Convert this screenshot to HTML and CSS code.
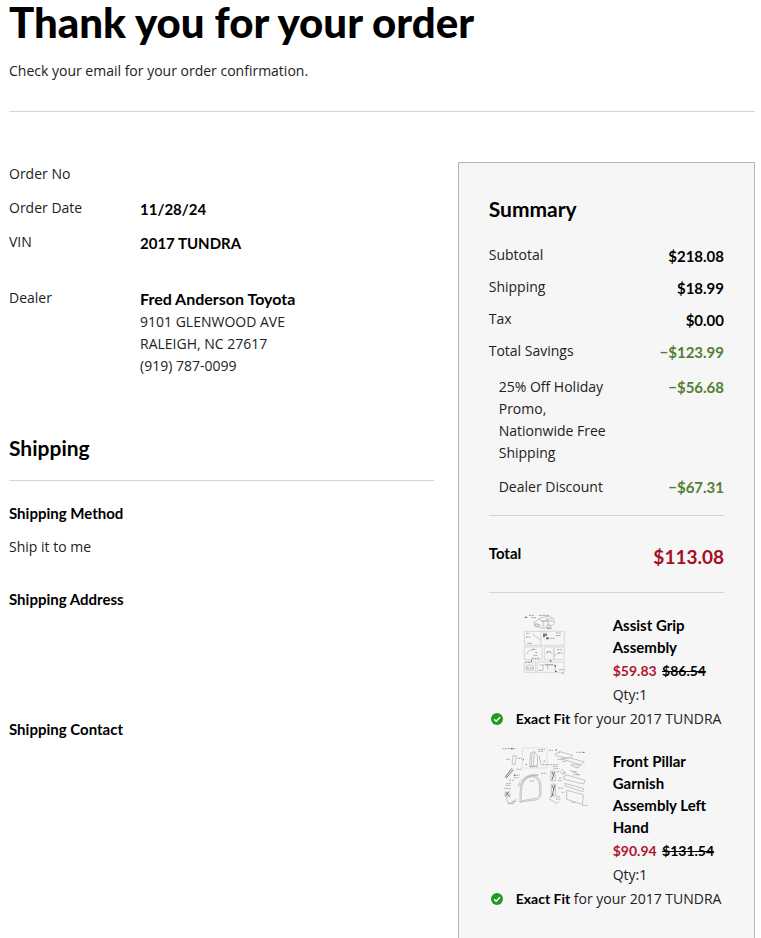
FILE: index.html
```html
<!DOCTYPE html>
<html lang="en">
<head>
    <meta charset="UTF-8">
    <meta name="viewport" content="width=device-width, initial-scale=1.0">
    <title>Order Confirmation</title>
    <link rel="stylesheet" href="styles.css">
</head>
<body>
    <header class="page-header">
        <h1>Thank you for your order</h1>
        <p>Check your email for your order confirmation.</p>
    </header>

    <main class="content">
        <div class="details">
            <dl class="order-info">
                <dt>Order No</dt>
                <dd></dd>
                <dt>Order Date</dt>
                <dd><strong>11/28/24</strong></dd>
                <dt>VIN</dt>
                <dd><strong>2017 TUNDRA</strong></dd>
                <dt class="dealer">Dealer</dt>
                <dd class="dealer">
                    <strong>Fred Anderson Toyota</strong>
                    <address>9101 GLENWOOD AVE<br>RALEIGH, NC 27617<br>(919) 787-0099</address>
                </dd>
            </dl>

            <section class="shipping">
                <h2>Shipping</h2>
                <h3>Shipping Method</h3>
                <p>Ship it to me</p>
                <h3>Shipping Address</h3>
                <div class="empty-address"></div>
                <h3>Shipping Contact</h3>
            </section>
        </div>

        <aside class="summary">
            <h2>Summary</h2>
            <dl class="costs">
                <div class="row"><dt>Subtotal</dt><dd>$218.08</dd></div>
                <div class="row"><dt>Shipping</dt><dd>$18.99</dd></div>
                <div class="row"><dt>Tax</dt><dd>$0.00</dd></div>
                <div class="row"><dt>Total Savings</dt><dd class="saving">−$123.99</dd></div>
                <div class="row sub"><dt>25% Off Holiday Promo,<br>Nationwide Free Shipping</dt><dd class="saving">−$56.68</dd></div>
                <div class="row sub"><dt>Dealer Discount</dt><dd class="saving">−$67.31</dd></div>
                <div class="row total"><dt>Total</dt><dd>$113.08</dd></div>
            </dl>

            <article class="item">
                <div class="picture">
                    <svg width="43" height="64" viewBox="130 30 129 192" role="img" aria-label="Assist grip diagram">
                        <g fill="none" stroke="#c8c8c8" stroke-width="2">
                            <path d="M134 91H254V133H134ZM134 138H187V176H134ZM194 138H221V176H194ZM224 138H254V176H224ZM134 183H168V214H134ZM173 183H254V214H173ZM184 91V133"/>
                        </g>
                        <g fill="none" stroke="#aaa" stroke-width="2">
                            <path d="M163 65L181 51 205 46 221 51 225 66 211 78 190 82 165 74ZM178 55L192 60 216 53M192 60V79M202 50L207 76M165 68L186 74M184 62L222 60"/>
                            <circle cx="172" cy="73" r="5"/><circle cx="207" cy="76" r="6"/>
                            <path d="M158 98L184 118M140 160Q148 142 170 145M198 160Q206 148 217 158M226 163L240 154M139 195Q150 188 161 195V207H140ZM179 192H226V208M190 190V207M204 190V207"/>
                        </g>
                        <g stroke="#777" stroke-width="2" stroke-dasharray="6 2">
                            <path d="M148 43H162M138 49H144M155 50H171M178 43H208M202 83H218M140 97H150M138 108H154M143 127H158M190 97H202M229 96H243M228 104H242M210 112H226M158 145H166M162 163H174M156 172H181M200 152H213M232 146H247M235 156H249M137 184H154M142 201H161M178 208H189M198 191H222M239 206H252M246 217H254"/>
                        </g>
                        <path d="M190 100H202V104H190ZM200 109H207V115H200ZM190 106H196V109H190ZM136 47H140V51H136ZM168 153H171V156H168ZM211 178H215V182H211ZM154 178H157V182H154ZM225 193H229V197H225ZM226 209H231V213H226Z" fill="#555"/>
                    </svg>
                </div>
                <div class="info">
                    <h3>Assist Grip Assembly</h3>
                    <p class="price"><ins>$59.83</ins> <del>$86.54</del></p>
                    <p>Qty:1</p>
                </div>
                <p class="fit">
                    <svg width="12" height="12" viewBox="0 0 12 12" aria-hidden="true"><circle cx="6" cy="6" r="6" fill="#219a21"/><path d="M3 6.2L5.2 8.3 9 4.3" fill="none" stroke="#fff" stroke-width="1.5"/></svg>
                    <span><b>Exact Fit</b> for your 2017 TUNDRA</span>
                </p>
            </article>

            <article class="item">
                <div class="picture">
                    <svg width="88" height="60" viewBox="60 42 264 180" role="img" aria-label="Front pillar garnish diagram">
                        <path d="M124 45H198V105H124Z" fill="none" stroke="#d4d4d4" stroke-width="2"/>
                        <g fill="none" stroke="#aaa" stroke-width="2">
                            <path d="M96 68L106 69 102 94 93 93ZM148 60L160 56 157 99 146 101ZM160 56L170 69 169 98 157 99M174 67L180 96M153 60L151 99"/>
                            <path d="M222 63L237 56 276 67 263 76 224 68ZM241 77L266 74 310 87 299 96ZM269 95L299 96 291 105 273 99ZM236 54V61"/>
                            <path d="M248 130L258 126 312 142 308 153 250 139ZM251 151L309 167 306 176 252 159ZM257 172L307 185 304 214 257 199ZM266 111L295 126M242 108L253 120 244 125"/>
                            <path d="M110 158Q122 133 151 125H174M113 162Q127 137 153 128H171"/>
                            <path d="M117 208V177Q119 130 151 128Q178 127 180 158V185Q178 202 153 202Q125 206 117 208ZM121 204V178Q123 134 151 131Q174 132 176 159V184Q174 198 151 198Q129 202 121 204Z"/>
                            <path d="M73 176L88 184 83 192 71 187ZM76 193L80 209 98 211 104 198M204 197L226 211 235 205M209 114L222 115 223 143 210 144ZM211 154L223 153 224 188 211 190Z"/>
                        </g>
                        <path d="M72 133L93 106M75 136L97 110M74 178L87 191M84 175L74 190M213 117L219 130M220 118L213 141M213 157L219 170M221 156L214 187M208 194L217 184" fill="none" stroke="#777" stroke-width="3"/>
                        <g stroke="#888" stroke-width="2" stroke-dasharray="6 2">
                            <path d="M65 47H106M75 79H87M111 76H123M107 109H123M98 127H116M99 134H114M84 142H101M76 151H90M74 157H89M68 166H83M84 167H92M82 212H99M172 50H192M172 55H187M180 121H197M146 144H162M147 101H169M183 95H206M204 52H216M286 58H311M230 79H244M244 85H255M208 95H234M215 101H231M218 107H235M228 116H240M273 116H288M277 125H297M234 135H244M230 143H243M231 165H248M242 178H251M226 191H237M225 198H238M272 208H284M305 217H319M92 205H105M241 120H254"/>
                        </g>
                        <path d="M90 45H95V49H90ZM126 79H129V82H126ZM134 93H137V96H134ZM224 49H227V53H224ZM307 56H310V60H307ZM188 83H191V86H188ZM100 124H103V128H100Z" fill="#555"/>
                    </svg>
                </div>
                <div class="info">
                    <h3>Front Pillar Garnish Assembly Left Hand</h3>
                    <p class="price"><ins>$90.94</ins> <del>$131.54</del></p>
                    <p>Qty:1</p>
                </div>
                <p class="fit">
                    <svg width="12" height="12" viewBox="0 0 12 12" aria-hidden="true"><circle cx="6" cy="6" r="6" fill="#219a21"/><path d="M3 6.2L5.2 8.3 9 4.3" fill="none" stroke="#fff" stroke-width="1.5"/></svg>
                    <span><b>Exact Fit</b> for your 2017 TUNDRA</span>
                </p>
            </article>
        </aside>
    </main>
</body>
</html>
```

FILE: styles.css
```css
* {
    box-sizing: border-box;
}

body {
    margin: 0 6px 0 9px;
    font-family: "Open Sans", "Noto Sans", sans-serif;
    font-size: 14px;
    line-height: 22px;
    color: #222;
    background-color: #fff;
}

h1, h2, h3, p, dl, dd {
    margin: 0;
}

h1, h2, h3, strong, b {
    color: #000;
}

.page-header {
    padding-bottom: 29px;
    border-bottom: 1px solid #d5d5d5;
}

h1 {
    margin-bottom: 16px;
    font-family: Lato, sans-serif;
    font-size: 42px;
    font-weight: 900;
    line-height: 44px;
}

h2 {
    font-family: Lato, sans-serif;
    font-size: 21px;
    font-weight: 700;
    line-height: 28px;
}

h3 {
    font-family: Lato, sans-serif;
    font-size: 15px;
    font-weight: 700;
}

.content {
    display: grid;
    grid-template-columns: 10fr 7fr;
    column-gap: 24px;
    padding-top: 50px;
}

.order-info {
    display: grid;
    grid-template-columns: 131px 1fr;
    grid-auto-rows: minmax(24px, auto);
    row-gap: 10px;
    padding-top: 1px;
}

.order-info strong {
    display: block;
    font-family: Lato, sans-serif;
    font-size: 15px;
    font-weight: 700;
    line-height: 24px;
}

.order-info .dealer {
    margin-top: 22px;
}

.dealer strong {
    font-size: 16px;
}

address {
    font-style: normal;
}

.shipping {
    margin-top: 57px;
}

.shipping h2 {
    margin-bottom: 21px;
    padding-bottom: 18px;
    border-bottom: 1px solid #d5d5d5;
}

.shipping p {
    margin: 12px 0 30px;
}

.empty-address {
    height: 108px;
}

.summary {
    padding: 32px 30px;
    border: 1px solid #b5b5b5;
    background-color: #f6f6f6;
}

.summary h2 {
    margin-bottom: 21px;
}

.row {
    display: flex;
    justify-content: space-between;
    gap: 16px;
    margin-bottom: 8px;
}

.row dd {
    font-family: Lato, sans-serif;
    font-size: 15px;
    font-weight: 700;
    line-height: 24px;
    white-space: nowrap;
    color: #000;
}

.row .saving {
    color: #508030;
}

.sub {
    margin: 12px 0;
    padding-left: 10px;
}

.sub dt {
    max-width: 120px;
}

.sub dd {
    line-height: 22px;
}

.total {
    margin: 17px 0 18px;
    padding: 26px 0 22px;
    border: 1px solid #d5d5d5;
    border-width: 1px 0;
}

.total dt {
    font-family: Lato, sans-serif;
    font-size: 15px;
    font-weight: 700;
    color: #000;
}

.total dd {
    padding-top: 2px;
    font-size: 19px;
    line-height: 26px;
    color: #a50e20;
}

.item {
    display: grid;
    grid-template-columns: 112px 1fr;
    column-gap: 12px;
    margin-bottom: 16px;
}

.picture svg {
    display: block;
    margin: 0 auto;
}

.info {
    padding-top: 3px;
}

.price {
    margin-top: 1px;
    font-family: Lato, sans-serif;
    font-weight: 700;
    color: #000;
}

.info p,
.fit {
    line-height: 24px;
}

.price ins {
    margin-right: 2px;
    color: #b0142c;
    text-decoration: none;
}

.fit {
    display: flex;
    grid-column: 1 / -1;
    align-items: center;
    gap: 13px;
    padding-left: 2px;
    white-space: nowrap;
}

.fit b {
    font-family: Lato, sans-serif;
    font-weight: 700;
}
```
